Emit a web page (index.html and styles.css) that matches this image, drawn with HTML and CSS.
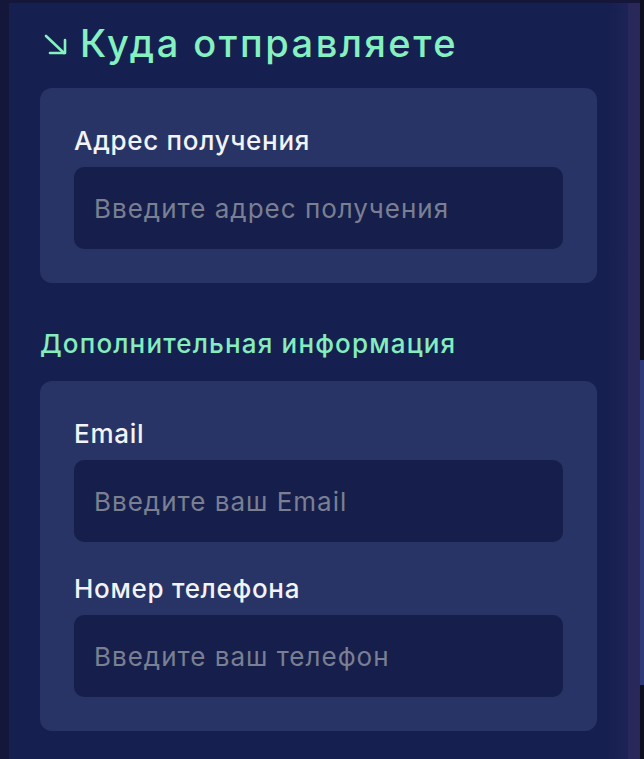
FILE: index.html
```html
<!DOCTYPE html>
<html lang="ru">

<head>
    <meta charset="UTF-8">
    <meta name="viewport" content="width=device-width, initial-scale=1.0">
    <title>Куда отправляете</title>
    <link rel="stylesheet" href="styles.css">
</head>

<body>
    <div class="screen">
        <div class="panel">
            <h2 class="title">
                <svg class="title-icon" width="24" height="22" viewBox="0 0 24 22" fill="none" stroke="currentColor" stroke-width="2.6" stroke-linecap="round" stroke-linejoin="round">
                    <path d="M2 2 L20 19"/>
                    <path d="M21 6 V19 H6"/>
                </svg>
                Куда отправляете
            </h2>

            <div class="card">
                <label class="field-label" for="address">Адрес получения</label>
                <input class="field-input" id="address" type="text" placeholder="Введите адрес получения">
            </div>

            <h3 class="subtitle">Дополнительная информация</h3>

            <div class="card">
                <div class="field">
                    <label class="field-label" for="email">Email</label>
                    <input class="field-input" id="email" type="text" placeholder="Введите ваш Email">
                </div>
                <div class="field">
                    <label class="field-label" for="phone">Номер телефона</label>
                    <input class="field-input" id="phone" type="text" placeholder="Введите ваш телефон">
                </div>
            </div>
        </div>

        <div class="edge"></div>
        <div class="rail"></div>
        <div class="scrollbar">
            <div class="scroll-track top"></div>
            <div class="scroll-thumb"></div>
            <div class="scroll-track"></div>
        </div>
    </div>
</body>

</html>
```

FILE: styles.css
```css
* {
    margin: 0;
    padding: 0;
    box-sizing: border-box;
}

body {
    font-family: Inter, 'Noto Sans', sans-serif;
    background: #14163a;
    height: 759px;
    overflow: hidden;
}

.screen {
    display: flex;
    height: 759px;
    padding: 3px 0 0 9px;
}

.panel {
    width: 601px;
    background: #162050;
    padding: 18px 13px 0 31px;
}

.title {
    display: flex;
    align-items: center;
    gap: 12px;
    height: 44px;
    font-size: 38px;
    font-weight: 500;
    color: #85f0c0;
    letter-spacing: 2.5px;
    margin-bottom: 23px;
}

.title-icon {
    margin-left: 4px;
    margin-top: 4px;
}

.card {
    background: #283465;
    border-radius: 12px;
    padding: 38px 34px 34px;
}

.card + .subtitle {
    margin-top: 45px;
}

.subtitle {
    font-size: 26px;
    font-weight: 500;
    line-height: 32px;
    letter-spacing: 1.15px;
    color: #85ecbe;
    margin-bottom: 21px;
}

.field + .field {
    margin-top: 32px;
}

.field-label {
    display: block;
    font-size: 26px;
    font-weight: 500;
    line-height: 30px;
    letter-spacing: 0.7px;
    color: #f2f3f7;
    margin-bottom: 11px;
}

.field-input {
    display: block;
    width: 100%;
    height: 82px;
    border: none;
    outline: none;
    border-radius: 10px;
    background: #161f4b;
    padding: 0 20px;
    font-family: inherit;
    font-size: 26px;
    letter-spacing: 1px;
    color: #e8e8ee;
}

.field-input::placeholder {
    color: #7a7f92;
}

.edge {
    width: 18px;
    background: linear-gradient(90deg, #172050, #1d2357);
}

.rail {
    width: 12px;
    background: #28285a;
}

.scrollbar {
    width: 4px;
    display: flex;
    flex-direction: column;
    margin-top: -3px;
}

.scroll-track {
    flex: 1;
    background: #0e0f1e;
}

.scroll-track.top {
    flex: none;
    height: 360px;
}

.scroll-thumb {
    height: 325px;
    background: #2e3a78;
}
```
